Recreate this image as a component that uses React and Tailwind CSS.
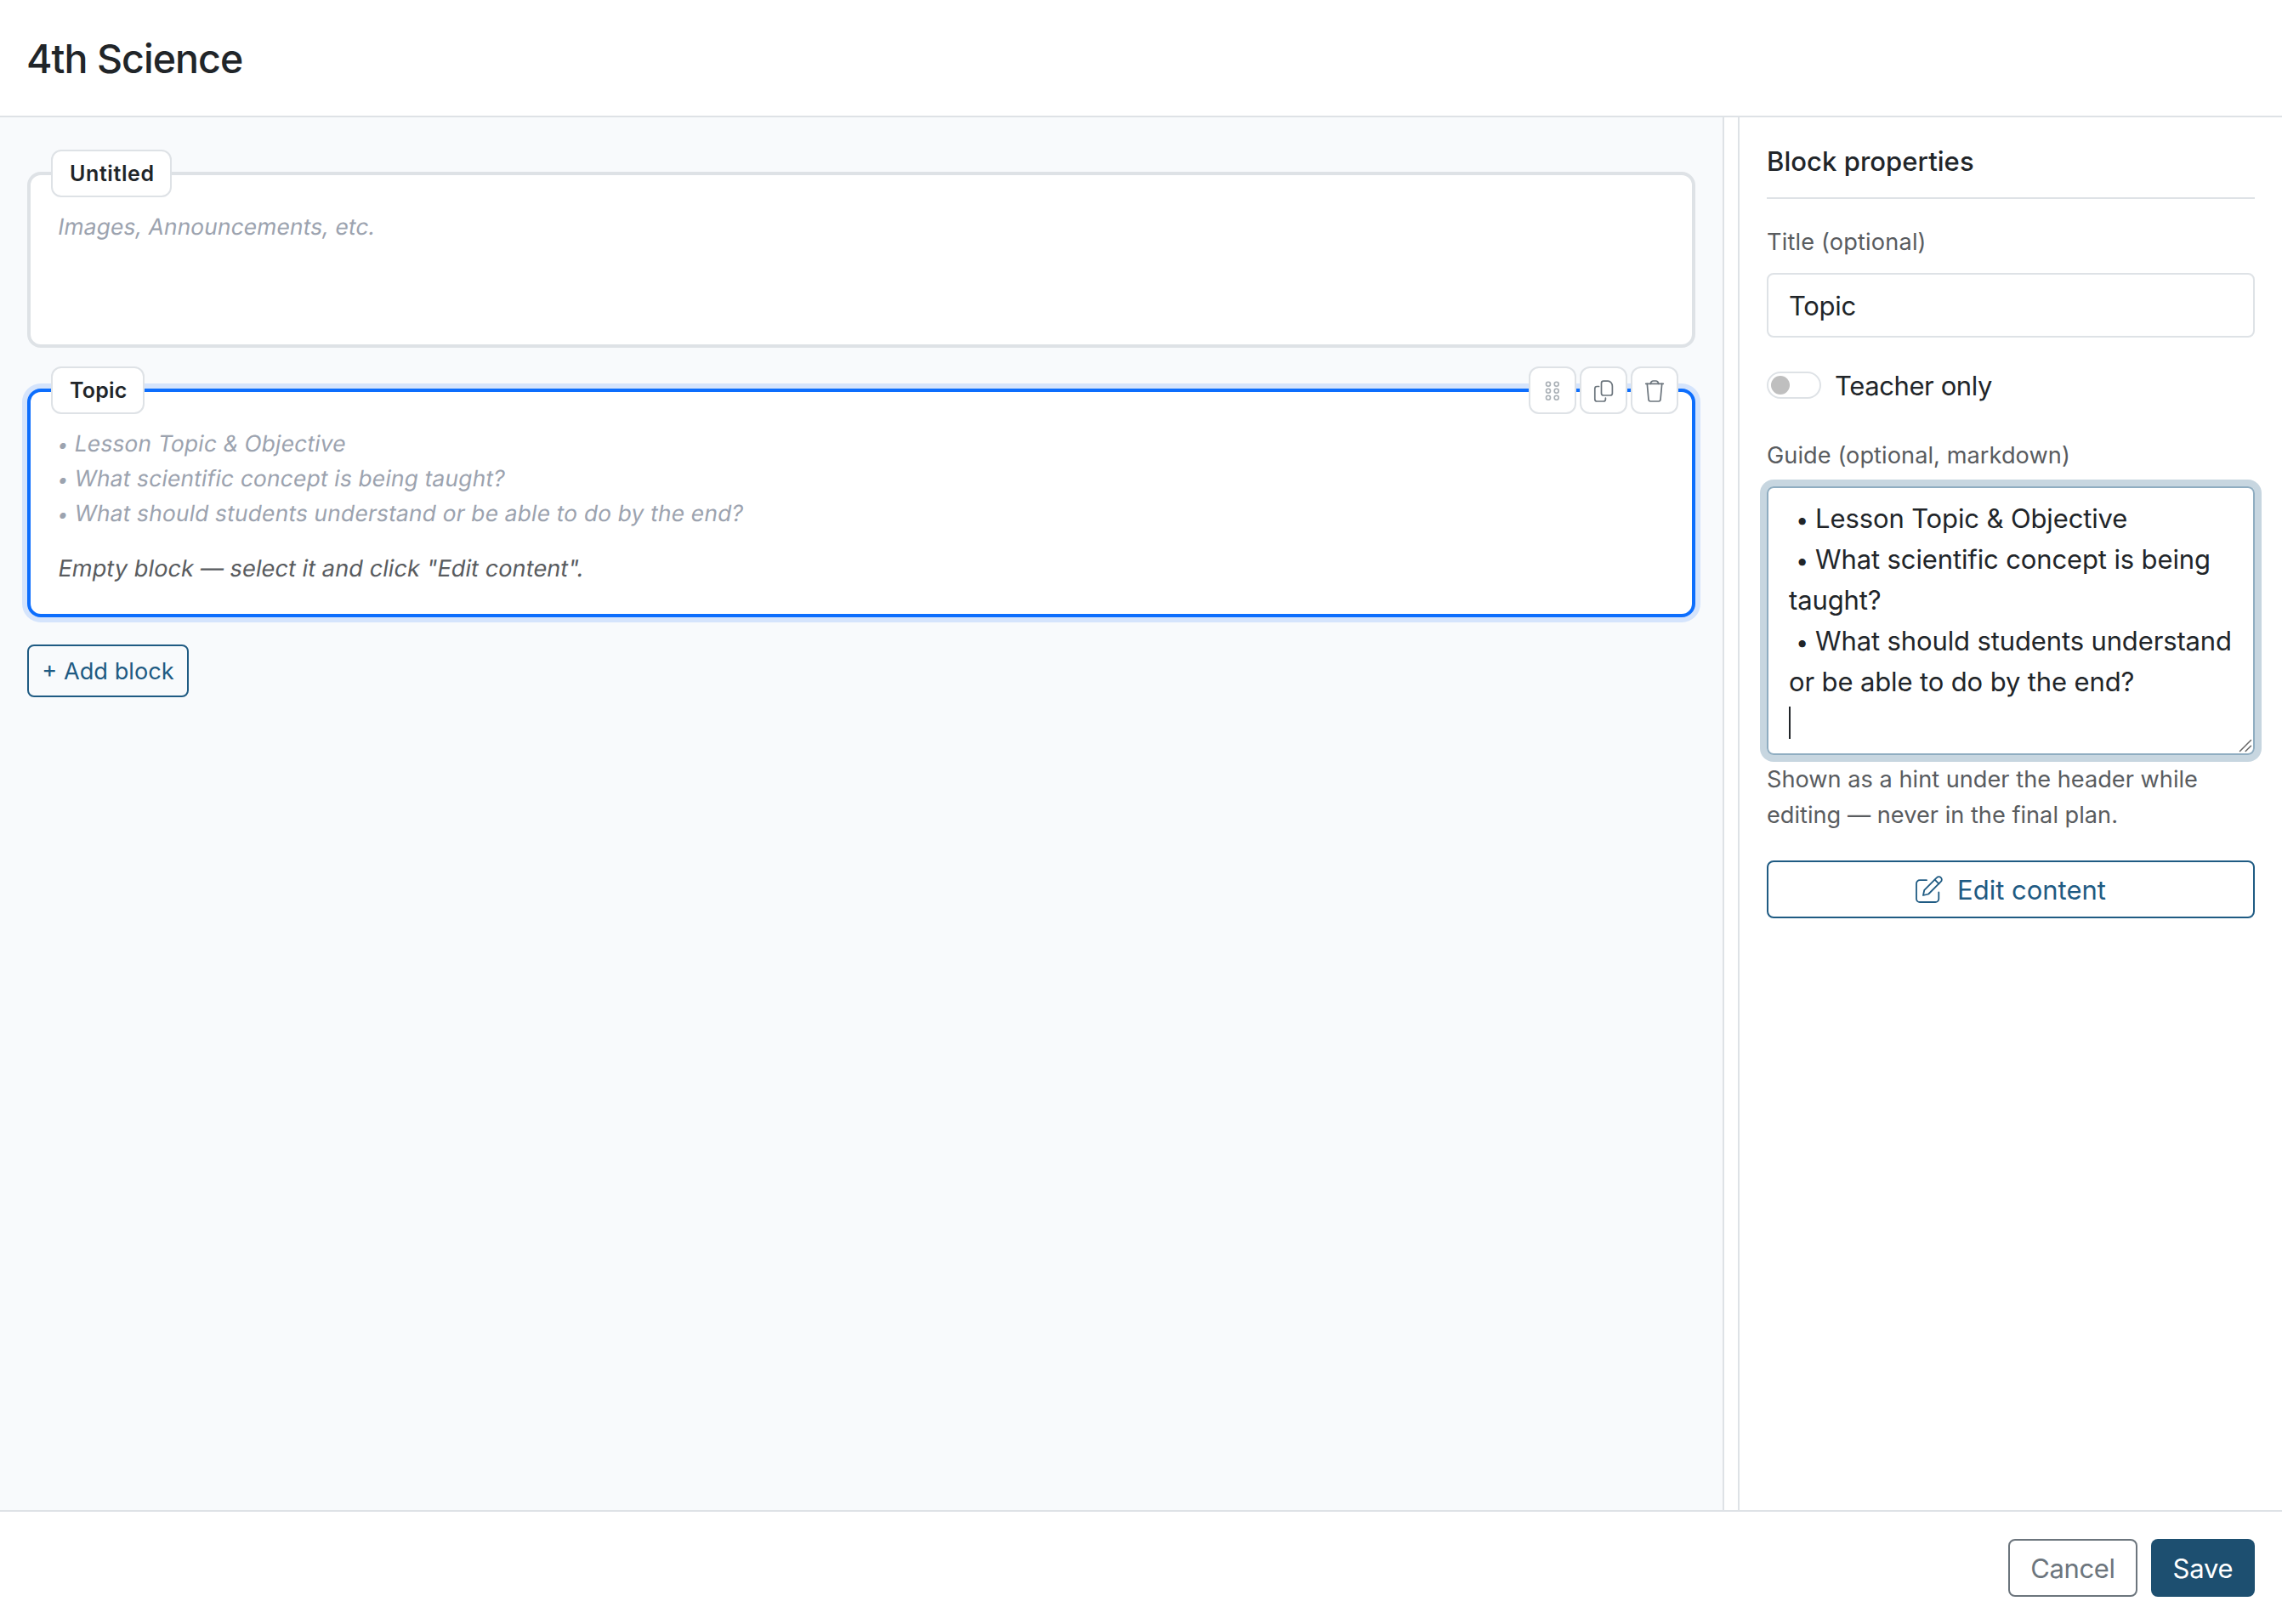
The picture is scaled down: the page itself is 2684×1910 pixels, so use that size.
import React, { useState } from "react";
import clsx from "clsx";

const guideLines = [
  "Lesson Topic & Objective",
  "What scientific concept is being taught?",
  "What should students understand or be able to do by the end?",
];

const toolClass =
  "flex h-14 w-14 items-center justify-center rounded-xl border-2 border-[#dee2e6] bg-white";

const labelClass = "block text-[27.2px] leading-[42px] text-[#595c5f]";

/* ================= ICONS ================= */
function DragIcon() {
  return (
    <svg viewBox="2 2 52 52" className="h-[52px] w-[52px] shrink-0" fill="none" stroke="#a9afb5" strokeWidth="1.6">
      {[20.7, 28.7, 36.7].map((y) => (
        <g key={y}>
          <circle cx="23" cy={y} r="2.5" />
          <circle cx="32.7" cy={y} r="2.5" />
        </g>
      ))}
    </svg>
  );
}

function CopyIcon() {
  return (
    <svg viewBox="2 2 52 52" className="h-[52px] w-[52px] shrink-0" fill="none" stroke="#6c757d" strokeWidth="1.7" strokeLinecap="round" strokeLinejoin="round">
      <path d="M28 17.2h5.2c3 0 5.2 3 5.2 6v8.3a2.5 2.5 0 0 1-2.5 2.5H28a2.5 2.5 0 0 1-2.5-2.5V19.7a2.5 2.5 0 0 1 2.5-2.5z" />
      <path d="M22.6 23.5h-2.3a2.5 2.5 0 0 0-2.5 2.5v12.5a2.5 2.5 0 0 0 2.5 2.5h7.6a2.5 2.5 0 0 0 2.5-2.5v-1.3" />
    </svg>
  );
}

function TrashIcon() {
  return (
    <svg viewBox="2 2 52 52" className="h-[52px] w-[52px] shrink-0" fill="none" stroke="#6c757d" strokeWidth="1.7" strokeLinecap="round" strokeLinejoin="round">
      <path d="M17.7 20.3h20.6" />
      <path d="M23.3 20.3c.3-2 1.6-3.3 3.2-3.3h3c1.6 0 2.9 1.3 3.2 3.3" />
      <path d="M19.3 20.3l1.7 18.5a2.3 2.3 0 0 0 2.3 2.2h9.4a2.3 2.3 0 0 0 2.3-2.2l1.7-18.5" />
    </svg>
  );
}

function EditIcon() {
  return (
    <svg viewBox="0 0 32 32" className="h-8 w-8" fill="none" stroke="currentColor" strokeWidth="1.8" strokeLinecap="round" strokeLinejoin="round">
      <path d="M13 5.2H5a4 4 0 0 0-4 4V27a4 4 0 0 0 4 4h18.3a4 4 0 0 0 4-4v-7.5" />
      <path d="M9 23l1.3-6.2L25 2.1a3.3 3.3 0 0 1 4.8 0 3.3 3.3 0 0 1 0 4.8L15.2 21.5z" />
      <path d="M22.7 4.6l4.7 4.7" />
    </svg>
  );
}

/* ================= BLOCKS ================= */
function Bullet() {
  return (
    <span className="inline-flex w-[0.45em] justify-center leading-none">
      <span className="text-[0.85em]">•</span>
    </span>
  );
}

function Slanted({ className, children }) {
  return (
    <p className={clsx("-ml-px w-fit origin-[0_74%] -skew-x-[9.5deg] whitespace-pre", className)}>
      {children}
    </p>
  );
}

function Block({ title, tagClass, className, tools, children }) {
  return (
    <section className={clsx("relative rounded-2xl border-4 bg-white px-8 pt-10", className)}>
      <span
        className={clsx(
          "absolute left-6 -top-[30px] flex h-14 items-center rounded-xl border-2 border-[#dee2e6] bg-white pt-0.5 pl-5 text-[25px] font-semibold text-[#212529]",
          tagClass
        )}
      >
        {title}
      </span>
      {tools && (
        <div className="absolute right-4 -top-[30px] flex gap-1">
          <button className={toolClass}><DragIcon /></button>
          <button className={toolClass}><CopyIcon /></button>
          <button className={toolClass}><TrashIcon /></button>
        </div>
      )}
      {children}
    </section>
  );
}

export default function App() {
  const [title, setTitle] = useState("Topic");

  return (
    <div className="flex h-[1910px] w-[2684px] flex-col bg-white font-[Inter,sans-serif] text-[31px] text-[#212529]">
      {/* ================= HEADER ================= */}
      <header className="flex h-[138px] shrink-0 items-center border-b-2 border-[#dee2e6] px-8 pt-1">
        <h1 className="-ml-px text-[46.5px] font-medium tracking-[-0.95px]">4th Science</h1>
      </header>

      <div className="flex min-h-0 flex-1">
        {/* ================= CANVAS ================= */}
        <main className="w-[2028px] shrink-0 border-r-2 border-[#dee2e6] bg-[#f8fafc] px-8 pt-16">
          <Block
            title="Untitled"
            tagClass="w-[142px] tracking-[0.6px]"
            className="h-[207px] border-[#dee2e6]"
          >
            <Slanted className="text-[26.4px] leading-[41px] tracking-[0.1px] text-[#9ca3af]">
              Images, Announcements, etc.
            </Slanted>
          </Block>

          <Block
            title="Topic"
            tagClass="w-[110px] tracking-[0.2px]"
            className="mt-12 h-[269px] border-[#0d6efd] shadow-[0_0_0_6px_rgba(13,110,253,0.15)]"
            tools
          >
            {guideLines.map((line) => (
              <Slanted key={line} className="text-[26.4px] leading-[41px] tracking-[0.16px] text-[#9ca3af]">
                <Bullet /> {line}
              </Slanted>
            ))}
            <Slanted className="mt-6 text-[27.2px] leading-[42px] tracking-[0.04px] text-[#595c5f]">
              Empty block — select it and click "Edit content".
            </Slanted>
          </Block>

          <button className="mt-8 flex h-[62px] w-[190px] items-center justify-center rounded-lg border-2 border-[#1f5b83] pt-0.5 text-[27.2px] text-[#1f5b83]">
            + Add block
          </button>
        </main>

        {/* ================= PROPERTIES ================= */}
        <aside className="ml-4 min-w-0 flex-1 border-l-2 border-[#dee2e6] px-8 pt-[33px]">
          <h2 className="border-b-2 border-[#dee2e6] pb-[23px] font-medium leading-[38px] tracking-[0.05px]">
            Block properties
          </h2>

          <label className={clsx(labelClass, "mt-[30px] tracking-[0.15px]")}>Title (optional)</label>
          <input
            className="mt-[15px] block h-[76px] w-full rounded-lg border-2 border-[#dee2e6] px-6 tracking-[-0.3px] outline-none"
            value={title}
            onChange={(e) => setTitle(e.target.value)}
          />

          <div className="mt-8 flex h-12 items-center gap-4">
            <span className="flex h-8 w-16 items-center rounded-full border-2 border-[#dee2e6] pl-[3px]">
              <span className="h-[22px] w-[22px] rounded-full bg-[#bfbfbf]" />
            </span>
            <span className="pt-0.5 tracking-[-0.4px]">Teacher only</span>
          </div>

          <label className={clsx(labelClass, "mt-[38px] tracking-[0.05px]")}>Guide (optional, markdown)</label>
          <div
            role="textbox"
            className="relative mt-[15px] h-[316px] rounded-lg border-2 border-[#8fadc1] px-6 pt-3 leading-[48px] tracking-[-0.13px] whitespace-pre shadow-[0_0_0_8px_rgba(31,91,131,0.25)]"
          >
            <p> <Bullet /> Lesson Topic & Objective</p>
            <p> <Bullet /> What scientific concept is being</p>
            <p>taught?</p>
            <p> <Bullet /> What should students understand</p>
            <p>or be able to do by the end?</p>
            <span className="mt-[5px] block h-[38px] w-0.5 bg-[#212529]" />
            <svg viewBox="0 0 16 16" className="absolute right-px bottom-px h-4 w-4" stroke="#666" strokeWidth="1.5" strokeLinecap="round">
              <path d="M1.5 14.5l13-13M8.2 14.5l6.3-6.3" />
            </svg>
          </div>
          <p className="mt-2 text-[27.2px] leading-[42px] text-[#595c5f]">
            Shown as a hint under the header while
            <br />
            editing — never in the final plan.
          </p>

          <button className="mt-8 flex h-[68px] w-full items-center justify-center gap-[17px] rounded-lg border-2 border-[#1f5b83] text-[#1f5b83]">
            <EditIcon />
            <span className="pt-0.5">Edit content</span>
          </button>
        </aside>
      </div>

      {/* ================= ACTIONS ================= */}
      <footer className="flex h-[134px] shrink-0 items-center justify-end gap-4 border-t-2 border-[#dee2e6] px-8">
        <button className="h-[68px] w-[152px] rounded-lg border-2 border-[#6c757d] pt-0.5 tracking-[-0.4px] text-[#6c757d]">
          Cancel
        </button>
        <button className="h-[68px] w-[122px] rounded-lg bg-[#1d4f70] pt-0.5 tracking-[-0.2px] text-white">
          Save
        </button>
      </footer>
    </div>
  );
}
